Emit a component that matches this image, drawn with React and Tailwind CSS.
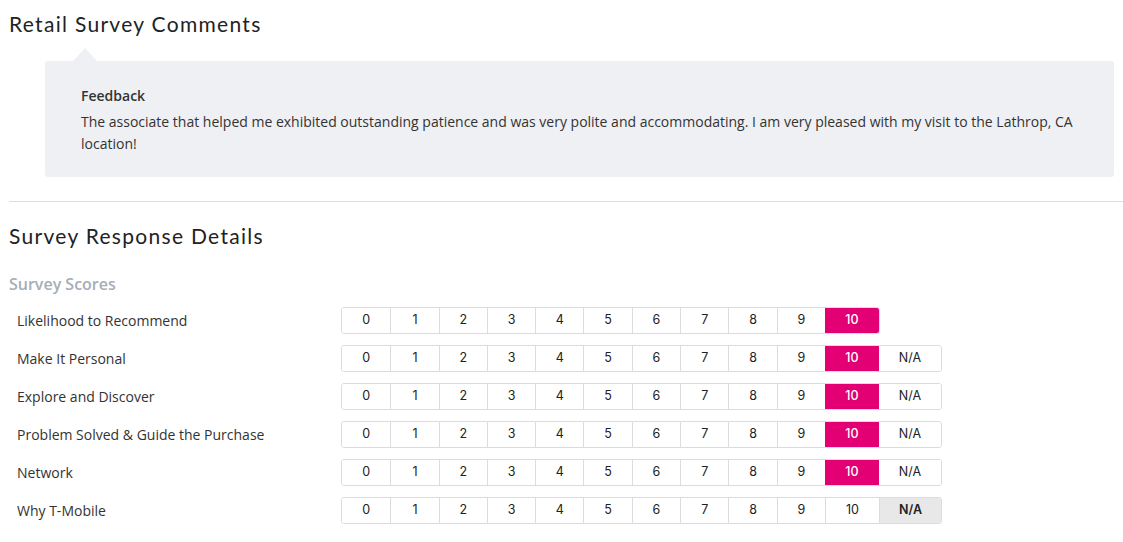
import React from "react";

const rows = [
  { label: "Likelihood to Recommend", value: 10, na: false },
  { label: "Make It Personal", value: 10, na: true },
  { label: "Explore and Discover", value: 10, na: true },
  { label: "Problem Solved & Guide the Purchase", value: 10, na: true },
  { label: "Network", value: 10, na: true },
  { label: "Why T-Mobile", value: "na", na: true },
];

const nums = [0, 1, 2, 3, 4, 5, 6, 7, 8, 9];

function ScoreRow({ row }) {
  const sel10 = row.value === 10;
  const selNa = row.value === "na";
  return (
    <div className="flex items-center h-[27px] mb-[11px]">
      <div className="w-[332px] pl-2 text-[14px] text-[#333]">{row.label}</div>
      <div className="flex h-[27px] text-[12.5px] text-[#222] font-['Inter',sans-serif]">
        <div className="flex border border-[#dcdcdc] rounded-[3px] overflow-hidden">
          {nums.map((n, i) => (
            <div
              key={n}
              className={
                "w-[48.3px] flex items-center justify-center bg-white " +
                (i > 0 ? "border-l border-[#dcdcdc]" : "")
              }
            >
              {n}
            </div>
          ))}
          <div
            className={
              "w-[54px] flex items-center justify-center " +
              (sel10 ? "bg-[#e20074] text-white font-medium" : "bg-white border-l border-[#dcdcdc]")
            }
          >
            10
          </div>
          {row.na && (
            <div
              className={
                "w-[62px] flex items-center justify-center " +
                (selNa ? "bg-[#e8e8e8] font-semibold border-l border-[#dcdcdc]" : "bg-white")
              }
            >
              N/A
            </div>
          )}
        </div>
      </div>
    </div>
  );
}

export default function App() {
  return (
    <div className="w-[1123px] h-[542px] bg-white pl-[9px] font-['Open_Sans',sans-serif] text-[#333] overflow-hidden">
      <h1 className="pt-[10px] text-[21px] leading-[28px] font-['Lato',sans-serif] text-[#222] tracking-[1.3px]">
        Retail Survey Comments
      </h1>
      <div className="relative ml-[36px] mr-[9px] mt-[23px]">
        <div className="absolute left-[28px] -top-[13px] w-0 h-0 border-l-[12px] border-r-[12px] border-b-[13px] border-l-transparent border-r-transparent border-b-[#eff0f3]" />
        <div className="bg-[#eff0f3] rounded-[3px] pl-[36px] pr-[30px] pt-[24px] pb-[24px] h-[116px]">
          <div className="font-semibold text-[14px] leading-[22px] text-[#333]">Feedback</div>
          <p className="text-[14px] leading-[22px] mt-[4px] text-[#333]">
            The associate that helped me exhibited outstanding patience and was very polite and accommodating. I am very pleased with my visit to the Lathrop, CA location!
          </p>
        </div>
      </div>
      <div className="mt-[24px] border-t border-[#dcdcdc]" />
      <h2 className="mt-[20px] text-[21px] leading-[28px] font-['Lato',sans-serif] text-[#222] tracking-[1.3px]">
        Survey Response Details
      </h2>
      <div className="mt-[24px] text-[16px] leading-[20px] font-semibold text-[#a7adb6]">Survey Scores</div>
      <div className="mt-[13px]">
        {rows.map((r) => (
          <ScoreRow key={r.label} row={r} />
        ))}
      </div>
    </div>
  );
}
